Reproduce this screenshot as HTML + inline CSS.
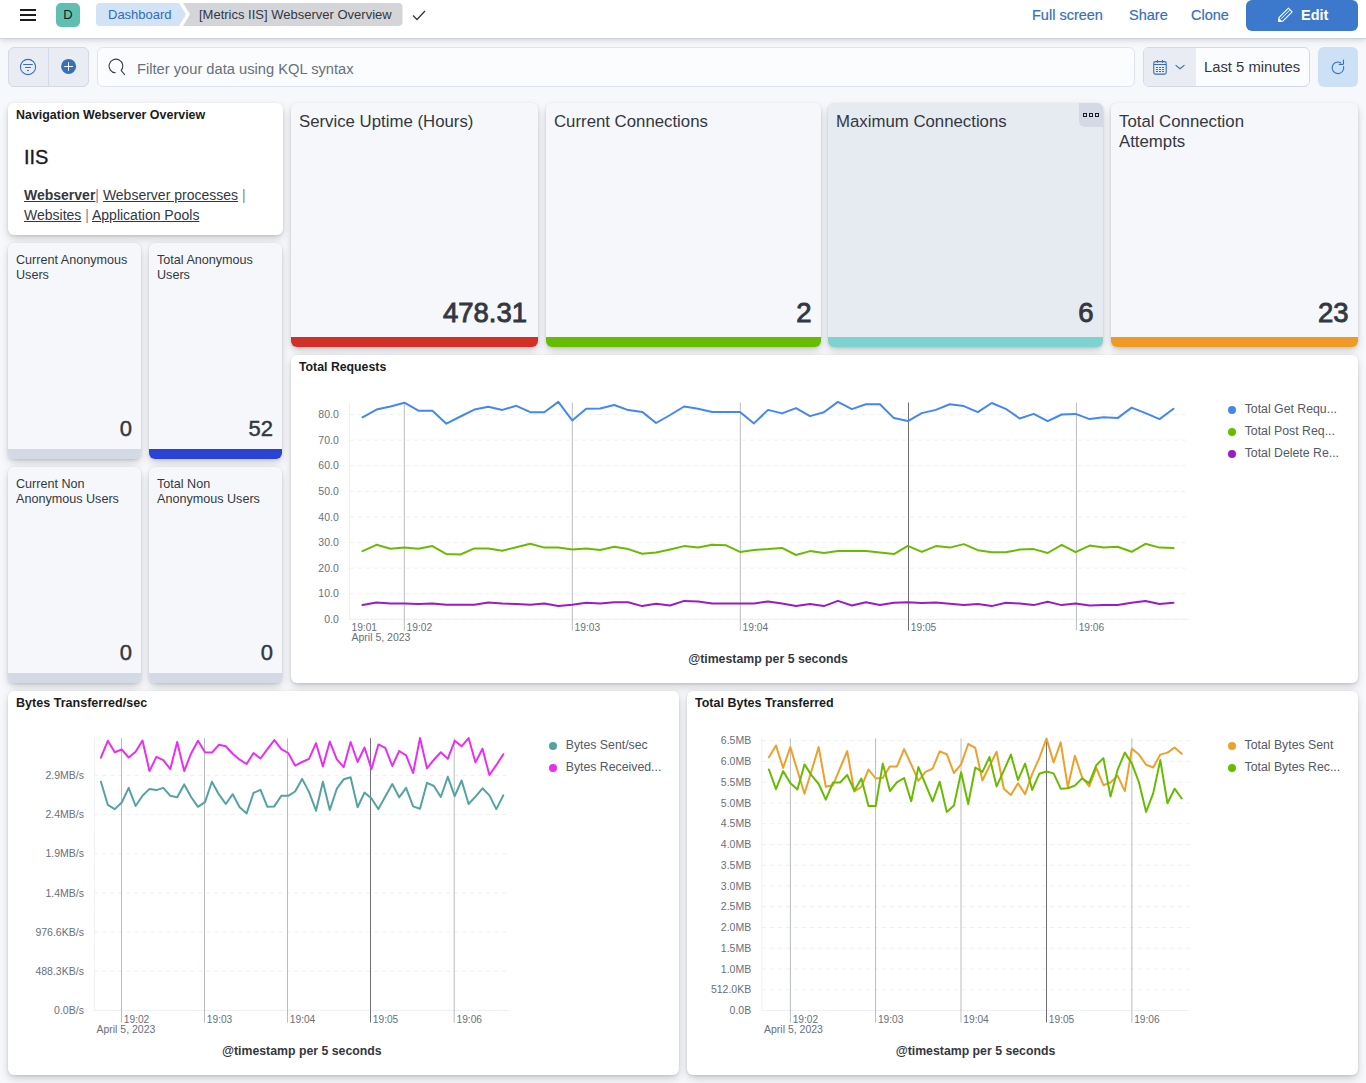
<!DOCTYPE html><html><head><meta charset="utf-8"><style>
*{box-sizing:border-box;margin:0;padding:0}
html,body{width:1366px;height:1083px;overflow:hidden;background:#f7f8fc;font-family:"Liberation Sans", sans-serif;}
.abs{position:absolute}
.t{position:absolute;white-space:nowrap;line-height:1}
.panel{position:absolute;background:#fff;border-radius:6px;box-shadow:0 1px 3px rgba(0,0,0,.12),0 3px 8px rgba(0,0,0,.10),0 7px 12px -2px rgba(0,0,0,.07);overflow:hidden}
.metric{background:#f5f7fa}
.bar{position:absolute;left:0;right:0;bottom:0;height:10px}
</style></head><body>

<div class="abs" style="left:0;top:0;width:1366px;height:39px;background:#fff;border-bottom:1px solid #ccd2de;box-shadow:0 1px 4px rgba(0,0,0,.10),0 3px 8px rgba(0,0,0,.05)"></div>
<div class="abs" style="left:20px;top:9px;width:16px;height:2px;background:#1a1c21"></div>
<div class="abs" style="left:20px;top:14px;width:16px;height:2px;background:#1a1c21"></div>
<div class="abs" style="left:20px;top:19px;width:16px;height:2px;background:#1a1c21"></div>
<div class="abs" style="left:56px;top:3px;width:24px;height:24px;border-radius:5px;background:#5fc0b1;color:#1a1c21;font-size:13px;line-height:24px;text-align:center">D</div>
<svg class="abs" style="left:96px;top:3px" width="310" height="23" viewBox="0 0 310 23"><path d="M4 0 H83 L90 11.5 L83 23 H4 Q0 23 0 19 V4 Q0 0 4 0Z" fill="#d2e3f5"/><path d="M87 0 H302 Q306.5 0 306.5 4 V19 Q306.5 23 302 23 H87 L94 11.5Z" fill="#d4d5d9"/></svg>
<div class="t" style="left:108px;top:8px;font-size:13px;color:#2f6cc0">Dashboard</div>
<div class="t" style="left:199px;top:8px;font-size:13px;color:#343741">[Metrics IIS] Webserver Overview</div>
<svg class="abs" style="left:411px;top:8px" width="16" height="14" viewBox="0 0 16 14"><path d="M2 7.5 L6 11.5 L14 3" fill="none" stroke="#343741" stroke-width="1.3"/></svg>
<div class="t" style="left:1032px;top:8px;font-size:14.5px;color:#3570c0;-webkit-text-stroke:0.2px #3570c0">Full screen</div>
<div class="t" style="left:1129px;top:8px;font-size:14.5px;color:#3570c0;-webkit-text-stroke:0.2px #3570c0">Share</div>
<div class="t" style="left:1191px;top:8px;font-size:14.5px;color:#3570c0;-webkit-text-stroke:0.2px #3570c0">Clone</div>
<div class="abs" style="left:1246px;top:0px;width:112px;height:31px;background:#3c78cb;border-radius:0 0 6px 6px;border-radius:6px"></div>
<svg class="abs" style="left:1277px;top:6px" width="17" height="17" viewBox="0 0 17 17"><path d="M1.6 15.4 L1.9 11.6 L11.4 2.1 L15.1 5.8 L5.6 15.3 Z" fill="none" stroke="#fff" stroke-width="1.1" stroke-linejoin="round"/><path d="M4.2 12.6 L12.6 4.2" stroke="#fff" stroke-width="1"/><path d="M1.4 15.6 L1.8 12 L5.2 15.3 Z" fill="#fff"/></svg>
<div class="t" style="left:1301px;top:8px;font-size:14.5px;color:#fff;font-weight:700">Edit</div>
<div class="abs" style="left:8px;top:47px;width:81px;height:40px;background:#e9edf3;border:1px solid #d3dae6;border-radius:6px"></div>
<div class="abs" style="left:48px;top:48px;width:1px;height:38px;background:#d3dae6"></div>
<svg class="abs" style="left:19px;top:58px" width="18" height="18" viewBox="0 0 18 18"><circle cx="9" cy="9" r="7.6" fill="none" stroke="#3570c0" stroke-width="1.1"/><path d="M4.2 6.5 H13.8 M6.1 9.5 H11.9 M8 12.5 H10" stroke="#3570c0" stroke-width="1"/></svg>
<svg class="abs" style="left:60px;top:58px" width="17" height="17" viewBox="0 0 17 17"><circle cx="8.6" cy="8.4" r="7.5" fill="#3570c0"/><path d="M4.2 8.5 H13 M8.5 4.2 V12.8" stroke="#fff" stroke-width="1"/></svg>
<div class="abs" style="left:97px;top:47px;width:1038px;height:40px;background:#fbfcfd;border:1px solid #dfe5ef;border-radius:6px"></div>
<svg class="abs" style="left:108px;top:58px" width="18" height="18" viewBox="0 0 18 18"><path d="M7.3 14.82 A6.85 6.85 0 1 1 13.15 12.4 L16.6 16.6" fill="none" stroke="#343741" stroke-width="1.05" stroke-linecap="round" stroke-linejoin="round"/></svg>
<div class="t" style="left:137px;top:62px;font-size:14.7px;color:#69707d">Filter your data using KQL syntax</div>
<div class="abs" style="left:1143px;top:47px;width:167px;height:40px;background:#fbfcfd;border:1px solid #d3dae6;border-radius:6px;overflow:hidden"><div class="abs" style="left:0;top:0;width:52px;height:38px;background:#e9edf3"></div></div>
<svg class="abs" style="left:1152px;top:59px" width="16" height="18" viewBox="0 0 16 18"><rect x="1.75" y="2.6" width="12.45" height="12.5" rx="1.6" fill="none" stroke="#3570c0" stroke-width="1.1"/><path d="M1.75 5.5 H14.2 M5.5 1 V3.8 M10.5 1 V3.8" stroke="#3570c0" stroke-width="1.1"/><path d="M4 8.5 H6 M7 8.5 H9 M10 8.5 H12 M4 10.5 H6 M7 10.5 H9 M10 10.5 H12 M4 12.5 H6 M7 12.5 H9 M10 12.5 H12" stroke="#3570c0" stroke-width="1"/></svg>
<svg class="abs" style="left:1174px;top:63px" width="12" height="8" viewBox="0 0 12 8"><path d="M1.6 2.1 L6 5.8 L10.5 2.1" fill="none" stroke="#3570c0" stroke-width="1.2"/></svg>
<div class="t" style="left:1204px;top:60px;font-size:14.8px;color:#343741">Last 5 minutes</div>
<div class="abs" style="left:1318px;top:47px;width:40px;height:40px;background:#cce1f5;border-radius:6px"></div>
<svg class="abs" style="left:1329px;top:58px" width="18" height="18" viewBox="0 0 18 18"><path d="M11.6 4.7 A5.8 5.8 0 1 0 14.6 8.6" fill="none" stroke="#3570c0" stroke-width="1.1" stroke-linecap="round"/><path d="M14.5 2 V5.4 Q14.5 6.4 13.5 6.4 H10.3" fill="none" stroke="#3570c0" stroke-width="1.1" stroke-linecap="round"/></svg>
<div class="panel" style="left:8px;top:103px;width:275px;height:132px"></div>
<div class="t" style="left:16px;top:109.2px;font-size:12.45px;color:#1a1c21;font-weight:700;">Navigation Webserver Overview</div>
<div class="t" style="left:24px;top:147px;font-size:20px;color:#1a1c21;font-weight:400;-webkit-text-stroke:0.35px #1a1c21;">IIS</div>
<div class="t" style="left:24px;top:185px;font-size:14px;line-height:20px;color:#343741"><u style="font-weight:700">Webserver</u><span style="color:#8a7f8f">|</span> <u>Webserver processes</u> <span style="color:#8a7f8f">|</span><br><u>Websites</u> <span style="color:#8a7f8f">|</span> <u>Application Pools</u></div>
<div class="panel metric" style="background:#f5f7fa;left:8px;top:243px;width:133px;height:216px"><div class="bar" style="background:#d3dae6"></div></div>
<div class="t" style="left:16px;top:253px;font-size:12.6px;line-height:15px;color:#343741;white-space:normal;width:125px">Current Anonymous<br>Users</div>
<div class="t" style="right:1234px;top:418px;font-size:22px;color:#343741;font-weight:400;-webkit-text-stroke:0.45px #343741">0</div>
<div class="panel metric" style="background:#f5f7fa;left:149px;top:243px;width:133px;height:216px"><div class="bar" style="background:#2a43d4"></div></div>
<div class="t" style="left:157px;top:253px;font-size:12.6px;line-height:15px;color:#343741;white-space:normal;width:125px">Total Anonymous<br>Users</div>
<div class="t" style="right:1093px;top:418px;font-size:22px;color:#343741;font-weight:400;-webkit-text-stroke:0.45px #343741">52</div>
<div class="panel metric" style="background:#f5f7fa;left:8px;top:467px;width:133px;height:216px"><div class="bar" style="background:#d3dae6"></div></div>
<div class="t" style="left:16px;top:477px;font-size:12.6px;line-height:15px;color:#343741;white-space:normal;width:125px">Current Non<br>Anonymous Users</div>
<div class="t" style="right:1234px;top:642px;font-size:22px;color:#343741;font-weight:400;-webkit-text-stroke:0.45px #343741">0</div>
<div class="panel metric" style="background:#f5f7fa;left:149px;top:467px;width:133px;height:216px"><div class="bar" style="background:#d3dae6"></div></div>
<div class="t" style="left:157px;top:477px;font-size:12.6px;line-height:15px;color:#343741;white-space:normal;width:125px">Total Non<br>Anonymous Users</div>
<div class="t" style="right:1093px;top:642px;font-size:22px;color:#343741;font-weight:400;-webkit-text-stroke:0.45px #343741">0</div>
<div class="panel metric" style="background:#f5f7fa;left:291px;top:103px;width:247px;height:244px"><div class="bar" style="background:#d22f27"></div></div>
<div class="t" style="left:299px;top:112px;font-size:16.8px;line-height:20px;color:#343741">Service Uptime (Hours)</div>
<div class="t" style="right:839px;top:299px;font-size:27.5px;color:#343741;font-weight:400;-webkit-text-stroke:0.9px #343741">478.31</div>
<div class="panel metric" style="background:#f5f7fa;left:546px;top:103px;width:275px;height:244px"><div class="bar" style="background:#68bc00"></div></div>
<div class="t" style="left:554px;top:112px;font-size:16.8px;line-height:20px;color:#343741">Current Connections</div>
<div class="t" style="right:554.5px;top:299px;font-size:27.5px;color:#343741;font-weight:400;-webkit-text-stroke:0.9px #343741">2</div>
<div class="panel metric" style="background:#e6ebf2;left:828px;top:103px;width:275px;height:244px"><div class="bar" style="background:#7ed3d1"></div></div>
<div class="t" style="left:836px;top:112px;font-size:16.8px;line-height:20px;color:#343741">Maximum Connections</div>
<div class="t" style="right:272.5px;top:299px;font-size:27.5px;color:#343741;font-weight:400;-webkit-text-stroke:0.9px #343741">6</div>
<div class="panel metric" style="background:#f5f7fa;left:1111px;top:103px;width:247px;height:244px"><div class="bar" style="background:#ee9a24"></div></div>
<div class="t" style="left:1119px;top:112px;font-size:16.8px;line-height:20px;color:#343741">Total Connection<br>Attempts</div>
<div class="t" style="right:17.5px;top:299px;font-size:27.5px;color:#343741;font-weight:400;-webkit-text-stroke:0.9px #343741">23</div>
<div class="abs" style="left:1079px;top:103px;width:24px;height:24px;background:#d3dae6;border-radius:0 6px 0 6px"></div>
<div class="abs" style="left:1083px;top:113px;width:4px;height:4px;border:1.2px solid #1a1c21"></div>
<div class="abs" style="left:1089px;top:113px;width:4px;height:4px;border:1.2px solid #1a1c21"></div>
<div class="abs" style="left:1095px;top:113px;width:4px;height:4px;border:1.2px solid #1a1c21"></div>
<div class="panel" style="left:291px;top:355px;width:1067px;height:328px"></div>
<div class="t" style="left:299px;top:361.3px;font-size:12.3px;color:#1a1c21;font-weight:700;">Total Requests</div>
<div class="panel" style="left:8px;top:691px;width:671px;height:384px"></div>
<div class="t" style="left:16px;top:697.3px;font-size:12.55px;color:#1a1c21;font-weight:700;">Bytes Transferred/sec</div>
<div class="panel" style="left:687px;top:691px;width:671px;height:384px"></div>
<div class="t" style="left:695px;top:697.3px;font-size:12.5px;color:#1a1c21;font-weight:700;">Total Bytes Transferred</div>
<svg class="abs" style="left:0;top:0" width="1366" height="1083" viewBox="0 0 1366 1083" font-family='"Liberation Sans", sans-serif'>
<line x1="349.5" y1="619.3" x2="1189" y2="619.3" stroke="#eceff3" stroke-width="1" stroke-dasharray="4 4"/>
<line x1="349.5" y1="593.6999999999999" x2="1189" y2="593.6999999999999" stroke="#eceff3" stroke-width="1" stroke-dasharray="4 4"/>
<line x1="349.5" y1="568.0999999999999" x2="1189" y2="568.0999999999999" stroke="#eceff3" stroke-width="1" stroke-dasharray="4 4"/>
<line x1="349.5" y1="542.5" x2="1189" y2="542.5" stroke="#eceff3" stroke-width="1" stroke-dasharray="4 4"/>
<line x1="349.5" y1="516.9" x2="1189" y2="516.9" stroke="#eceff3" stroke-width="1" stroke-dasharray="4 4"/>
<line x1="349.5" y1="491.29999999999995" x2="1189" y2="491.29999999999995" stroke="#eceff3" stroke-width="1" stroke-dasharray="4 4"/>
<line x1="349.5" y1="465.69999999999993" x2="1189" y2="465.69999999999993" stroke="#eceff3" stroke-width="1" stroke-dasharray="4 4"/>
<line x1="349.5" y1="440.0999999999999" x2="1189" y2="440.0999999999999" stroke="#eceff3" stroke-width="1" stroke-dasharray="4 4"/>
<line x1="349.5" y1="414.49999999999994" x2="1189" y2="414.49999999999994" stroke="#eceff3" stroke-width="1" stroke-dasharray="4 4"/>
<line x1="349.5" y1="402.5" x2="349.5" y2="619.3" stroke="#eef0f3" stroke-width="1"/>
<line x1="349.5" y1="619.3" x2="1189" y2="619.3" stroke="#eef0f3" stroke-width="1"/>
<line x1="404.3" y1="402.5" x2="404.3" y2="630.6" stroke="#b9bcc1" stroke-width="1"/>
<line x1="572.3" y1="402.5" x2="572.3" y2="630.6" stroke="#b9bcc1" stroke-width="1"/>
<line x1="740.3" y1="402.5" x2="740.3" y2="630.6" stroke="#b9bcc1" stroke-width="1"/>
<line x1="908.5" y1="402.5" x2="908.5" y2="630.6" stroke="#6e7075" stroke-width="1"/>
<line x1="1076.4" y1="402.5" x2="1076.4" y2="630.6" stroke="#b9bcc1" stroke-width="1"/>
<text x="338.8" y="623.0" text-anchor="end" font-size="10.5" fill="#69707d">0.0</text>
<text x="338.8" y="597.4" text-anchor="end" font-size="10.5" fill="#69707d">10.0</text>
<text x="338.8" y="571.8" text-anchor="end" font-size="10.5" fill="#69707d">20.0</text>
<text x="338.8" y="546.2" text-anchor="end" font-size="10.5" fill="#69707d">30.0</text>
<text x="338.8" y="520.6" text-anchor="end" font-size="10.5" fill="#69707d">40.0</text>
<text x="338.8" y="494.99999999999994" text-anchor="end" font-size="10.5" fill="#69707d">50.0</text>
<text x="338.8" y="469.3999999999999" text-anchor="end" font-size="10.5" fill="#69707d">60.0</text>
<text x="338.8" y="443.7999999999999" text-anchor="end" font-size="10.5" fill="#69707d">70.0</text>
<text x="338.8" y="418.19999999999993" text-anchor="end" font-size="10.5" fill="#69707d">80.0</text>
<text x="406.6" y="630.6" font-size="10.2" fill="#69707d">19:02</text>
<text x="574.5999999999999" y="630.6" font-size="10.2" fill="#69707d">19:03</text>
<text x="742.5999999999999" y="630.6" font-size="10.2" fill="#69707d">19:04</text>
<text x="910.8" y="630.6" font-size="10.2" fill="#69707d">19:05</text>
<text x="1078.7" y="630.6" font-size="10.2" fill="#69707d">19:06</text>
<text x="351.5" y="630.6" font-size="10.2" fill="#69707d">19:01</text>
<text x="351.5" y="640.8000000000001" font-size="10.5" fill="#69707d">April 5, 2023</text>
<polyline points="362.5,417.3 376.5,409.6 390.5,406.5 404.4,402.7 418.4,410.7 432.4,410.7 446.4,423.7 460.4,416.5 474.4,409.6 488.3,406.8 502.3,409.9 516.3,405.8 530.3,412.2 544.3,412.2 558.3,401.9 572.2,420.4 586.2,408.8 600.2,408.5 614.2,405.0 628.2,410.1 642.2,411.9 656.1,423.0 670.1,415.0 684.1,406.5 698.1,408.8 712.1,411.9 726.1,411.9 740.0,411.9 754.0,423.4 768.0,409.9 782.0,413.4 796.0,408.1 810.0,416.1 823.9,412.2 837.9,401.9 851.9,409.1 865.9,404.2 879.9,404.2 893.9,418.1 907.8,421.1 921.8,413.1 935.8,409.9 949.8,404.2 963.8,406.1 977.8,412.2 991.7,403.0 1005.7,408.8 1019.7,418.5 1033.7,413.9 1047.7,421.1 1061.7,414.5 1075.6,413.9 1089.6,419.1 1103.6,417.3 1117.6,418.1 1131.6,407.6 1145.5,413.1 1159.5,419.1 1173.5,408.8" fill="none" stroke="#4287f5" stroke-width="2" stroke-linejoin="round" stroke-linecap="round"/>
<polyline points="362.5,551.1 376.5,544.8 390.5,548.7 404.4,547.6 418.4,548.7 432.4,546.1 446.4,554.1 460.4,554.5 474.4,548.4 488.3,548.4 502.3,550.7 516.3,547.3 530.3,543.8 544.3,547.6 558.3,547.6 572.2,549.4 586.2,548.4 600.2,549.9 614.2,546.8 628.2,549.1 642.2,553.8 656.1,552.5 670.1,549.4 684.1,546.1 698.1,547.6 712.1,544.8 726.1,545.3 740.0,551.9 754.0,549.9 768.0,549.1 782.0,547.9 796.0,555.0 810.0,551.1 823.9,553.0 837.9,551.1 851.9,551.1 865.9,551.1 879.9,552.5 893.9,554.1 907.8,545.8 921.8,551.9 935.8,546.1 949.8,547.6 963.8,544.1 977.8,550.2 991.7,552.2 1005.7,552.2 1019.7,549.6 1033.7,549.1 1047.7,553.0 1061.7,544.8 1075.6,552.2 1089.6,545.6 1103.6,547.6 1117.6,546.8 1131.6,551.8 1145.5,543.8 1159.5,547.6 1173.5,548.1" fill="none" stroke="#68bc00" stroke-width="2" stroke-linejoin="round" stroke-linecap="round"/>
<polyline points="362.5,605.1 376.5,602.5 390.5,603.5 404.4,603.5 418.4,604.0 432.4,603.5 446.4,604.8 460.4,604.8 474.4,604.8 488.3,602.5 502.3,603.5 516.3,604.0 530.3,604.8 544.3,603.5 558.3,606.1 572.2,604.8 586.2,602.8 600.2,603.5 614.2,602.3 628.2,602.3 642.2,606.1 656.1,603.8 670.1,605.5 684.1,600.9 698.1,601.5 712.1,603.5 726.1,603.5 740.0,603.5 754.0,603.5 768.0,601.5 782.0,603.5 796.0,606.1 810.0,604.0 823.9,606.1 837.9,600.9 851.9,605.5 865.9,602.3 879.9,605.1 893.9,602.8 907.8,602.3 921.8,603.1 935.8,602.5 949.8,603.8 963.8,605.1 977.8,604.0 991.7,606.1 1005.7,602.8 1019.7,603.5 1033.7,605.1 1047.7,601.7 1061.7,605.1 1075.6,603.5 1089.6,605.5 1103.6,605.1 1117.6,605.1 1131.6,602.8 1145.5,600.9 1159.5,604.0 1173.5,602.8" fill="none" stroke="#9b1bc9" stroke-width="2" stroke-linejoin="round" stroke-linecap="round"/>
<text x="768" y="662.8" text-anchor="middle" font-size="12.3" font-weight="700" fill="#343741">@timestamp per 5 seconds</text>
<circle cx="1232" cy="410" r="4" fill="#4287f5"/>
<text x="1244.7" y="413" font-size="12.3" fill="#535966">Total Get Requ...</text>
<circle cx="1232" cy="432" r="4" fill="#68bc00"/>
<text x="1244.7" y="435" font-size="12.3" fill="#535966">Total Post Req...</text>
<circle cx="1232" cy="454" r="4" fill="#9b1bc9"/>
<text x="1244.7" y="457" font-size="12.3" fill="#535966">Total Delete Re...</text>
<line x1="94.5" y1="1010.4" x2="509.4" y2="1010.4" stroke="#eceff3" stroke-width="1" stroke-dasharray="4 4"/>
<line x1="94.5" y1="971.23" x2="509.4" y2="971.23" stroke="#eceff3" stroke-width="1" stroke-dasharray="4 4"/>
<line x1="94.5" y1="932.06" x2="509.4" y2="932.06" stroke="#eceff3" stroke-width="1" stroke-dasharray="4 4"/>
<line x1="94.5" y1="892.89" x2="509.4" y2="892.89" stroke="#eceff3" stroke-width="1" stroke-dasharray="4 4"/>
<line x1="94.5" y1="853.72" x2="509.4" y2="853.72" stroke="#eceff3" stroke-width="1" stroke-dasharray="4 4"/>
<line x1="94.5" y1="814.55" x2="509.4" y2="814.55" stroke="#eceff3" stroke-width="1" stroke-dasharray="4 4"/>
<line x1="94.5" y1="775.38" x2="509.4" y2="775.38" stroke="#eceff3" stroke-width="1" stroke-dasharray="4 4"/>
<line x1="94.5" y1="738.2" x2="94.5" y2="1010.4" stroke="#eef0f3" stroke-width="1"/>
<line x1="94.5" y1="1010.4" x2="509.4" y2="1010.4" stroke="#eef0f3" stroke-width="1"/>
<line x1="121.5" y1="738.2" x2="121.5" y2="1022.6" stroke="#b9bcc1" stroke-width="1"/>
<line x1="204.5" y1="738.2" x2="204.5" y2="1022.6" stroke="#b9bcc1" stroke-width="1"/>
<line x1="287.5" y1="738.2" x2="287.5" y2="1022.6" stroke="#b9bcc1" stroke-width="1"/>
<line x1="370.5" y1="738.2" x2="370.5" y2="1022.6" stroke="#6e7075" stroke-width="1"/>
<line x1="454.2" y1="738.2" x2="454.2" y2="1022.6" stroke="#b9bcc1" stroke-width="1"/>
<text x="83.9" y="1014.1" text-anchor="end" font-size="10.5" fill="#69707d">0.0B/s</text>
<text x="83.9" y="974.9300000000001" text-anchor="end" font-size="10.5" fill="#69707d">488.3KB/s</text>
<text x="83.9" y="935.76" text-anchor="end" font-size="10.5" fill="#69707d">976.6KB/s</text>
<text x="83.9" y="896.59" text-anchor="end" font-size="10.5" fill="#69707d">1.4MB/s</text>
<text x="83.9" y="857.4200000000001" text-anchor="end" font-size="10.5" fill="#69707d">1.9MB/s</text>
<text x="83.9" y="818.25" text-anchor="end" font-size="10.5" fill="#69707d">2.4MB/s</text>
<text x="83.9" y="779.08" text-anchor="end" font-size="10.5" fill="#69707d">2.9MB/s</text>
<text x="123.8" y="1022.6" font-size="10.2" fill="#69707d">19:02</text>
<text x="206.8" y="1022.6" font-size="10.2" fill="#69707d">19:03</text>
<text x="289.8" y="1022.6" font-size="10.2" fill="#69707d">19:04</text>
<text x="372.8" y="1022.6" font-size="10.2" fill="#69707d">19:05</text>
<text x="456.5" y="1022.6" font-size="10.2" fill="#69707d">19:06</text>
<text x="96.4" y="1032.8" font-size="10.5" fill="#69707d">April 5, 2023</text>
<polyline points="100.9,781.7 107.8,804.8 114.8,809.1 121.7,802.5 128.7,787.9 135.6,806.0 142.5,795.8 149.5,788.9 156.4,790.1 163.3,787.9 170.3,795.8 177.2,797.3 184.2,784.4 191.1,797.0 198.0,806.8 205.0,802.1 211.9,781.7 218.8,794.2 225.8,804.0 232.7,794.2 239.7,807.2 246.6,813.4 253.5,793.0 260.5,789.9 267.4,806.8 274.3,806.4 281.3,795.8 288.2,795.8 295.1,791.5 302.1,778.9 309.0,791.9 316.0,810.7 322.9,781.7 329.8,809.9 336.8,788.7 343.7,779.3 350.6,777.3 357.6,807.2 364.5,792.6 371.5,798.5 378.4,809.1 385.3,796.6 392.3,784.0 399.2,797.3 406.1,787.9 413.1,806.4 420.0,808.7 427.0,782.8 433.9,786.0 440.8,797.0 447.8,776.9 454.7,796.2 461.6,780.5 468.6,804.0 475.5,796.6 482.5,788.3 489.4,795.4 496.3,809.1 503.3,795.4" fill="none" stroke="#54a3a0" stroke-width="2" stroke-linejoin="round" stroke-linecap="round"/>
<polyline points="100.9,757.7 107.8,740.8 114.8,752.2 121.7,749.5 128.7,757.5 135.6,751.8 142.5,740.5 149.5,771.1 156.4,756.9 163.3,760.1 170.3,769.1 177.2,742.0 184.2,771.1 191.1,753.4 198.0,740.8 205.0,752.2 211.9,752.6 218.8,744.8 225.8,746.3 232.7,753.8 239.7,759.7 246.6,764.0 253.5,753.0 260.5,758.5 267.4,749.1 274.3,740.1 281.3,749.1 288.2,753.0 295.1,765.6 302.1,762.0 309.0,758.9 316.0,743.2 322.9,766.4 329.8,741.6 336.8,759.3 343.7,767.1 350.6,742.0 357.6,762.0 364.5,747.5 371.5,769.1 378.4,744.4 385.3,747.9 392.3,766.0 399.2,751.0 406.1,755.4 413.1,773.0 420.0,738.1 427.0,768.3 433.9,759.7 440.8,752.2 447.8,758.9 454.7,740.8 461.6,746.3 468.6,738.1 475.5,762.4 482.5,748.7 489.4,775.0 496.3,765.2 503.3,754.2" fill="none" stroke="#e82ef5" stroke-width="2" stroke-linejoin="round" stroke-linecap="round"/>
<text x="301.8" y="1054.5" text-anchor="middle" font-size="12.3" font-weight="700" fill="#343741">@timestamp per 5 seconds</text>
<circle cx="553" cy="746" r="4" fill="#54a3a0"/>
<text x="565.7" y="749" font-size="12.3" fill="#535966">Bytes Sent/sec</text>
<circle cx="553" cy="768" r="4" fill="#e82ef5"/>
<text x="565.7" y="771" font-size="12.3" fill="#535966">Bytes Received...</text>
<line x1="761.8" y1="1010.5" x2="1189.3" y2="1010.5" stroke="#eceff3" stroke-width="1" stroke-dasharray="4 4"/>
<line x1="761.8" y1="989.748" x2="1189.3" y2="989.748" stroke="#eceff3" stroke-width="1" stroke-dasharray="4 4"/>
<line x1="761.8" y1="968.996" x2="1189.3" y2="968.996" stroke="#eceff3" stroke-width="1" stroke-dasharray="4 4"/>
<line x1="761.8" y1="948.244" x2="1189.3" y2="948.244" stroke="#eceff3" stroke-width="1" stroke-dasharray="4 4"/>
<line x1="761.8" y1="927.492" x2="1189.3" y2="927.492" stroke="#eceff3" stroke-width="1" stroke-dasharray="4 4"/>
<line x1="761.8" y1="906.74" x2="1189.3" y2="906.74" stroke="#eceff3" stroke-width="1" stroke-dasharray="4 4"/>
<line x1="761.8" y1="885.988" x2="1189.3" y2="885.988" stroke="#eceff3" stroke-width="1" stroke-dasharray="4 4"/>
<line x1="761.8" y1="865.236" x2="1189.3" y2="865.236" stroke="#eceff3" stroke-width="1" stroke-dasharray="4 4"/>
<line x1="761.8" y1="844.484" x2="1189.3" y2="844.484" stroke="#eceff3" stroke-width="1" stroke-dasharray="4 4"/>
<line x1="761.8" y1="823.732" x2="1189.3" y2="823.732" stroke="#eceff3" stroke-width="1" stroke-dasharray="4 4"/>
<line x1="761.8" y1="802.98" x2="1189.3" y2="802.98" stroke="#eceff3" stroke-width="1" stroke-dasharray="4 4"/>
<line x1="761.8" y1="782.2280000000001" x2="1189.3" y2="782.2280000000001" stroke="#eceff3" stroke-width="1" stroke-dasharray="4 4"/>
<line x1="761.8" y1="761.476" x2="1189.3" y2="761.476" stroke="#eceff3" stroke-width="1" stroke-dasharray="4 4"/>
<line x1="761.8" y1="740.7239999999999" x2="1189.3" y2="740.7239999999999" stroke="#eceff3" stroke-width="1" stroke-dasharray="4 4"/>
<line x1="761.8" y1="738.3" x2="761.8" y2="1010.5" stroke="#eef0f3" stroke-width="1"/>
<line x1="761.8" y1="1010.5" x2="1189.3" y2="1010.5" stroke="#eef0f3" stroke-width="1"/>
<line x1="790.4" y1="738.3" x2="790.4" y2="1022.6" stroke="#b9bcc1" stroke-width="1"/>
<line x1="875.6" y1="738.3" x2="875.6" y2="1022.6" stroke="#b9bcc1" stroke-width="1"/>
<line x1="961.0" y1="738.3" x2="961.0" y2="1022.6" stroke="#b9bcc1" stroke-width="1"/>
<line x1="1046.5" y1="738.3" x2="1046.5" y2="1022.6" stroke="#6e7075" stroke-width="1"/>
<line x1="1131.9" y1="738.3" x2="1131.9" y2="1022.6" stroke="#b9bcc1" stroke-width="1"/>
<text x="751.2" y="1014.2" text-anchor="end" font-size="10.5" fill="#69707d">0.0B</text>
<text x="751.2" y="993.4480000000001" text-anchor="end" font-size="10.5" fill="#69707d">512.0KB</text>
<text x="751.2" y="972.696" text-anchor="end" font-size="10.5" fill="#69707d">1.0MB</text>
<text x="751.2" y="951.9440000000001" text-anchor="end" font-size="10.5" fill="#69707d">1.5MB</text>
<text x="751.2" y="931.192" text-anchor="end" font-size="10.5" fill="#69707d">2.0MB</text>
<text x="751.2" y="910.44" text-anchor="end" font-size="10.5" fill="#69707d">2.5MB</text>
<text x="751.2" y="889.6880000000001" text-anchor="end" font-size="10.5" fill="#69707d">3.0MB</text>
<text x="751.2" y="868.936" text-anchor="end" font-size="10.5" fill="#69707d">3.5MB</text>
<text x="751.2" y="848.1840000000001" text-anchor="end" font-size="10.5" fill="#69707d">4.0MB</text>
<text x="751.2" y="827.432" text-anchor="end" font-size="10.5" fill="#69707d">4.5MB</text>
<text x="751.2" y="806.6800000000001" text-anchor="end" font-size="10.5" fill="#69707d">5.0MB</text>
<text x="751.2" y="785.9280000000001" text-anchor="end" font-size="10.5" fill="#69707d">5.5MB</text>
<text x="751.2" y="765.176" text-anchor="end" font-size="10.5" fill="#69707d">6.0MB</text>
<text x="751.2" y="744.424" text-anchor="end" font-size="10.5" fill="#69707d">6.5MB</text>
<text x="792.6999999999999" y="1022.6" font-size="10.2" fill="#69707d">19:02</text>
<text x="877.9" y="1022.6" font-size="10.2" fill="#69707d">19:03</text>
<text x="963.3" y="1022.6" font-size="10.2" fill="#69707d">19:04</text>
<text x="1048.8" y="1022.6" font-size="10.2" fill="#69707d">19:05</text>
<text x="1134.2" y="1022.6" font-size="10.2" fill="#69707d">19:06</text>
<text x="764" y="1032.8" font-size="10.5" fill="#69707d">April 5, 2023</text>
<polyline points="768.9,757.3 776.0,745.6 783.1,767.9 790.3,747.1 797.4,770.5 804.5,793.8 811.6,770.5 818.7,747.1 825.8,786.8 833.0,785.2 840.1,768.2 847.2,751.1 854.3,791.5 861.4,786.8 868.5,769.5 875.7,778.5 882.8,777.7 889.9,766.4 897.0,766.4 904.1,749.1 911.2,764.4 918.4,780.9 925.5,771.9 932.6,768.7 939.7,751.4 946.8,754.2 953.9,773.0 961.1,764.4 968.2,744.0 975.3,747.9 982.4,780.5 989.5,766.0 996.6,751.8 1003.8,788.7 1010.9,795.0 1018.0,783.2 1025.1,794.2 1032.2,773.8 1039.3,758.1 1046.5,738.5 1053.6,762.4 1060.7,742.4 1067.8,787.2 1074.9,755.8 1082.0,777.0 1089.2,786.4 1096.3,767.9 1103.4,785.2 1110.5,782.5 1117.6,775.8 1124.8,791.1 1131.9,748.7 1139.0,754.6 1146.1,764.8 1153.2,767.5 1160.3,754.6 1167.5,752.6 1174.6,747.5 1181.7,753.8" fill="none" stroke="#eda02a" stroke-width="2" stroke-linejoin="round" stroke-linecap="round"/>
<polyline points="768.9,769.5 776.0,789.1 783.1,771.1 790.3,782.9 797.4,789.5 804.5,764.4 811.6,775.4 818.7,784.0 825.8,799.7 833.0,782.5 840.1,782.5 847.2,775.0 854.3,790.7 861.4,778.5 868.5,806.0 875.7,806.0 882.8,763.6 889.9,791.1 897.0,782.1 904.1,778.1 911.2,801.3 918.4,767.1 925.5,784.4 932.6,801.3 939.7,781.7 946.8,811.9 953.9,805.6 961.1,772.3 968.2,804.0 975.3,767.5 982.4,771.9 989.5,757.0 996.6,786.4 1003.8,770.7 1010.9,754.6 1018.0,780.1 1025.1,763.6 1032.2,789.9 1039.3,773.8 1046.5,771.5 1053.6,773.4 1060.7,788.7 1067.8,788.3 1074.9,785.6 1082.0,778.5 1089.2,783.2 1096.3,765.2 1103.4,758.1 1110.5,796.6 1117.6,769.9 1124.8,752.6 1131.9,763.6 1139.0,782.5 1146.1,811.9 1153.2,793.4 1160.3,760.1 1167.5,803.3 1174.6,788.7 1181.7,798.5" fill="none" stroke="#68bc00" stroke-width="2" stroke-linejoin="round" stroke-linecap="round"/>
<text x="975.5" y="1054.5" text-anchor="middle" font-size="12.3" font-weight="700" fill="#343741">@timestamp per 5 seconds</text>
<circle cx="1232" cy="746" r="4" fill="#eda02a"/>
<text x="1244.5" y="749" font-size="12.3" fill="#535966">Total Bytes Sent</text>
<circle cx="1232" cy="768" r="4" fill="#68bc00"/>
<text x="1244.5" y="771" font-size="12.3" fill="#535966">Total Bytes Rec...</text>
</svg>
</body></html>
